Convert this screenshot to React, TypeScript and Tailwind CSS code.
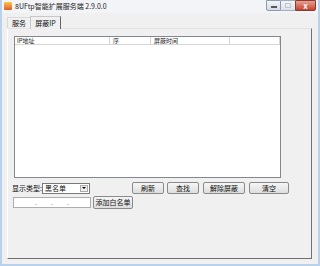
import React from "react";

const font = { fontFamily: '"Noto Sans CJK SC", "Noto Sans", sans-serif' };

function Btn({ label, w, className = "" }: { label: string; w: string; className?: string }) {
  return (
    <div
      className={`${w} h-[12px] flex items-center justify-center text-[7px] leading-none text-[#111] bg-gradient-to-b from-[#f6f6f6] to-[#dddddd] border border-[#8a8a8a] rounded-[2px] ${className}`}
    >
      {label}
    </div>
  );
}

export default function App() {
  return (
    <div
      className="w-[320px] h-[266px] bg-[#f0f0f0] border-x-[2px] border-b-[2px] border-[#b9d1ea] flex flex-col overflow-hidden relative"
      style={font}
    >
      {/* title bar */}
      <div className="h-[13px] flex items-start bg-[#f2f4f7]">
        <div className="ml-[2px] mt-[2px] w-[8px] h-[8px] bg-gradient-to-b from-[#f7c64a] to-[#e0572c] rounded-[1px]" />
        <div className="ml-[3px] mt-[1px] text-[7px] leading-[10px] text-[#222]">8UFtp智能扩展服务端 2.9.0.0</div>
        <div className="ml-auto mr-[2px] flex h-[11px]">
          <div className="w-[15px] h-[11px] border border-[#8c9bb0] bg-gradient-to-b from-[#f2f4f7] to-[#d5dbe4] rounded-bl-[2px] flex items-center justify-center">
            <div className="w-[6px] h-[2px] bg-[#556] mt-[3px]" />
          </div>
          <div className="w-[14px] h-[11px] border-y border-[#a0abba] bg-gradient-to-b from-[#f2f4f7] to-[#dde2ea] flex items-center justify-center">
            <div className="w-[6px] h-[5px] border border-[#bfc6d0]" />
          </div>
          <div className="w-[21px] h-[11px] border border-[#8a3a30] bg-gradient-to-b from-[#e6a092] to-[#c5402c] rounded-br-[2px] flex items-center justify-center text-white text-[8px] font-bold leading-none">
            x
          </div>
        </div>
      </div>

      {/* tabs */}
      <div className="mt-[2px] ml-[5px] flex items-end h-[13px]">
        <div className="h-[11px] px-[3px] w-[23px] flex items-center justify-center text-[7px] leading-none border-t border-l border-[#d9d9d9] bg-[#f0f0f0] text-[#111]">服务</div>
        <div className="h-[13px] w-[31px] flex items-center justify-center text-[7px] leading-none border-t border-x border-[#c8c8c8] border-r-[#666] bg-[#f0f0f0] text-[#111] relative z-10 -mb-[1px]">屏蔽IP</div>
      </div>

      {/* panel */}
      <div className="ml-[5px] w-[305px] h-[231px] border border-[#fff] border-r-[#707070] border-b-[#707070] border-t-[#e3e3e3] flex flex-col">
        <div className="ml-[6px] mt-[7px] w-[267px] h-[142px] border border-[#828790] bg-white flex flex-col">
          <div className="h-[8px] flex text-[6px] leading-[8px] text-[#222] border-b border-[#d5d5d5]">
            <div className="w-[95px] pl-[2px] border-r border-[#d5d5d5]">IP地址</div>
            <div className="w-[41px] pl-[3px] border-r border-[#d5d5d5]">序</div>
            <div className="w-[79px] pl-[3px] border-r border-[#d5d5d5]">屏蔽时间</div>
            <div className="w-[50px] border-r border-[#d5d5d5]" />
          </div>
        </div>

        <div className="flex items-center mt-[4px] h-[12px]">
          <div className="ml-[4px] text-[7px] leading-none text-[#111] w-[30px]">显示类型:</div>
          <div className="w-[48px] h-[11px] bg-white border border-[#7a7a7a] flex items-center">
            <div className="text-[7px] leading-none pl-[2px] text-[#111]">黑名单</div>
            <div className="ml-auto mr-[1px] w-[8px] h-[7px] border border-[#aaa] bg-[#eee] flex items-center justify-center">
              <div className="w-0 h-0 border-l-[2px] border-r-[2px] border-t-[2px] border-l-transparent border-r-transparent border-t-[#000]" />
            </div>
          </div>
          <Btn label="刷新" w="w-[32px]" className="ml-[42px]" />
          <Btn label="查找" w="w-[32px]" className="ml-[3px]" />
          <Btn label="解除屏蔽" w="w-[42px]" className="ml-[4px]" />
          <Btn label="清空" w="w-[40px]" className="ml-[4px]" />
        </div>

        <div className="flex items-center mt-[2px] h-[13px]">
          <div className="ml-[5px] w-[78px] h-[11px] bg-white border border-[#abadb3] flex items-center justify-around px-[14px] text-[6px] leading-none text-[#333]">
            <span>.</span><span>.</span><span>.</span>
          </div>
          <Btn label="添加白名单" w="w-[40px]" className="ml-[2px] h-[13px]" />
        </div>
      </div>
    </div>
  );
}
